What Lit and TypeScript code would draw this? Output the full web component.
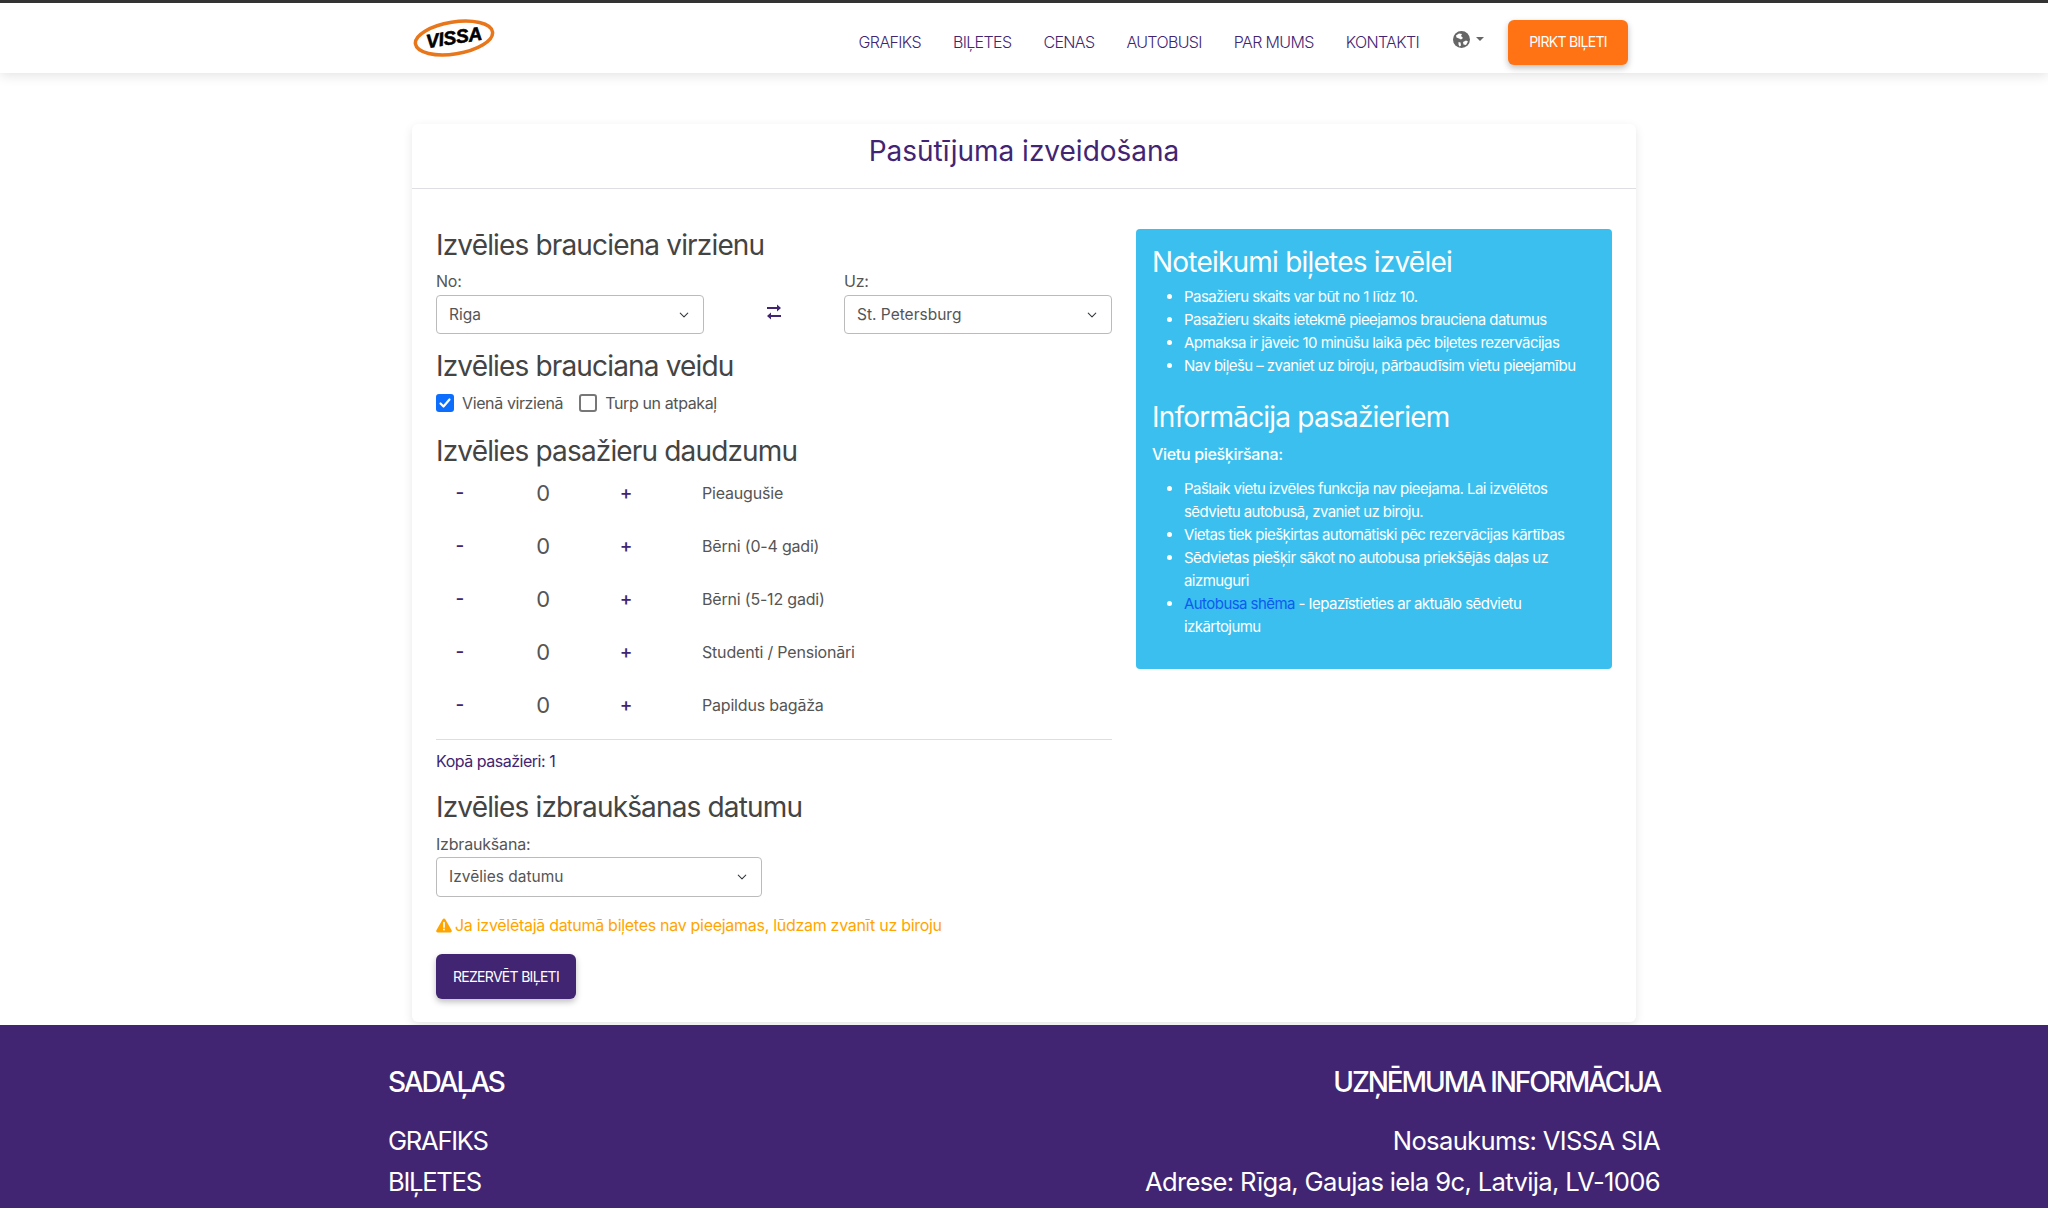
import { LitElement, html, css } from "lit";
import { customElement, state } from "lit/decorators.js";

const chevron = `url("data:image/svg+xml,%3csvg xmlns='http://www.w3.org/2000/svg' viewBox='0 0 16 16'%3e%3cpath fill='none' stroke='%23343a40' stroke-linecap='round' stroke-linejoin='round' stroke-width='1.7' d='m2 5 6 6 6-6'/%3e%3c/svg%3e")`;

@customElement("app-root")
export class AppRoot extends LitElement {
  static styles = css`
    :host { display: block; height: 1208px; overflow: hidden; background: #fff; color: #555; font-family: Inter, "Noto Sans", sans-serif; font-size: 16px; line-height: 24px; letter-spacing: -0.012em; }
    * { box-sizing: border-box; }
    header { height: 73px; background: #fff; border-top: 3px solid #333; box-shadow: 0 2px 12px rgba(0,0,0,.12); position: relative; }
    .bar { width: 1224px; margin: 0 auto; height: 70px; display: flex; align-items: flex-start; }
    .logo { margin-top: 15px; display: block; }
    nav { margin-left: auto; display: flex; align-items: center; gap: 32px; height: 78px; padding-right: 8px; }
    nav a { color: #412573; text-decoration: none; font-size: 16px; font-weight: 300; letter-spacing: -0.04em; }
    .lang { display: flex; align-items: center; gap: 6px; margin: -6px -16px 0 2px; }
    .caret { width: 0; height: 0; border: 4.5px solid transparent; border-top-color: #666; border-bottom: 0; }
    .buy { width: 120px; height: 45px; margin-left: 8px; border: 0; border-radius: 6px; background: #ff7315; color: #fff; font: inherit; font-size: 14px; letter-spacing: -0.05em; box-shadow: 0 3px 6px rgba(0,0,0,.25); }
    .card { width: 1224px; margin: 51px auto 0; height: 898px; background: #fff; border-radius: 6px; box-shadow: 0 3px 10px rgba(0,0,0,.1); }
    .title { height: 65px; border-bottom: 1px solid #dfdfe3; text-align: center; color: #412573; font-size: 28px; font-weight: 400; line-height: 54px; margin: 0; letter-spacing: 0; }
    .body { display: flex; padding: 40px 24px 0; gap: 24px; }
    .left { width: 676px; margin-top: -1px; }
    h3 { margin: 0; font-size: 28px; font-weight: 400; line-height: 34px; color: #444; letter-spacing: -0.03em; }
    label.lbl { display: block; line-height: 24px; }
    .dir { display: flex; justify-content: space-between; align-items: flex-end; margin-top: 7px; }
    .dir > div { width: 268px; }
    .dir select { margin-top: 2px; }
    .swap { width: 140px !important; display: flex; justify-content: center; padding-bottom: 14px; }
    select { display: block; width: 100%; height: 39px; padding: 0 36px 0 12px; appearance: none; border: 1px solid #bbb; border-radius: 4px; color: #555; font: inherit; font-size: 15.5px; letter-spacing: 0; background: #fff ${css([chevron] as any)} no-repeat right 13px center / 12px 10px; }
    .h2 { margin-top: 15px; }
    .checks { display: flex; align-items: center; height: 24px; margin-top: 8px; letter-spacing: -0.024em; }
    .checks label { display: flex; align-items: center; gap: 8px; margin-right: 16px; }
    input[type=checkbox] { appearance: none; margin: 0; width: 18px; height: 18px; border: 2px solid #777; border-radius: 3px; background: #fff; }
    input[type=checkbox]:checked { border: 0; background: #0d6efd; }
    .chk { position: relative; display: flex; }
    .chk svg { position: absolute; left: 0; top: 0; pointer-events: none; }
    .h3 { margin-top: 19px; }
    .rows { margin-top: -2px; }
    .row { display: grid; grid-template-columns: 48px 118px 48px 1fr; height: 53px; align-items: center; letter-spacing: -0.012em; }
    .row button { border: 0; background: none; color: #412573; font: inherit; font-size: 19px; padding: 0; text-align: center; font-weight: 500; }
    .row .n { text-align: center; font-size: 22px; color: #555; }
    .row .name { padding-left: 52px; }
    hr { border: 0; border-top: 1px solid #dedede; margin: 8px 0 0; }
    .total { color: #412573; margin-top: 9px; line-height: 24px; letter-spacing: -0.03em; }
    .h4 { margin-top: 17px; }
    .date { margin-top: 8px; }
    .date select { width: 326px; height: 40px; margin-top: 1px; }
    .warn { display: flex; align-items: center; gap: 3px; margin-top: 16px; color: #ffa500; letter-spacing: -0.018em; }
    .reserve { display: block; width: 140px; height: 45px; margin-top: 17px; border: 0; border-radius: 6px; background: #412573; color: #fff; font: inherit; font-size: 14px; letter-spacing: -0.05em; box-shadow: 0 3px 6px rgba(0,0,0,.25); }
    aside { width: 476px; height: 440px; background: #3abfee; color: #fff; border-radius: 4px; padding: 16px; font-size: 15px; line-height: 23px; letter-spacing: -0.037em; }
    aside h3 { color: #fff; font-size: 28px; letter-spacing: -0.028em; }
    aside ul { margin: 6px 0 0; padding-left: 32px; }
    aside a { color: #0d5cf0; text-decoration: none; }
    aside .i2 { margin-top: 23px; }
    aside p { margin: 9px 0 0; font-weight: 500; font-size: 16px; letter-spacing: -0.02em; }
    aside .l2 { margin-top: 11px; }
    footer { margin-top: 3px; height: 183px; overflow: hidden; background: #412573; color: #fff; }
    .fi { width: 1272px; margin: 0 auto; display: flex; justify-content: space-between; padding-top: 40px; }
    .fi h4 { margin: 0 0 21px; font-size: 28px; line-height: 34px; font-weight: 500; letter-spacing: -0.075em; text-transform: uppercase; }
    .fi div.r { text-align: right; }
    .fi a, .fi span { display: block; color: #fff; text-decoration: none; font-size: 25.6px; line-height: 41px; letter-spacing: -0.05em; }
    .fi span { letter-spacing: -0.026em; }
  `;

  @state() counts = [0, 0, 0, 0, 0];
  @state() oneWay = true;

  private bump(i: number, d: number) {
    this.counts = this.counts.map((v, j) => (j === i ? Math.max(0, v + d) : v));
  }

  render() {
    const names = ["Pieaugušie", "Bērni (0-4 gadi)", "Bērni (5-12 gadi)", "Studenti / Pensionāri", "Papildus bagāža"];
    const total = Math.max(1, this.counts.slice(0, 4).reduce((a, b) => a + b, 0));
    const tick = html`<svg width="18" height="18" viewBox="0 0 18 18" fill="none" stroke="#fff" stroke-width="2.2" stroke-linecap="round" stroke-linejoin="round"><path d="m4.5 9.5 3 3 6-7"/></svg>`;
    return html`
      <header>
        <div class="bar">
          <svg class="logo" width="84" height="40" viewBox="0 0 84 40">
            <ellipse cx="42" cy="20" rx="39" ry="16" transform="rotate(-9 42 20)" fill="#fff" stroke="#e8761a" stroke-width="3.5"/>
            <text x="42" y="26" text-anchor="middle" transform="rotate(-9 42 20)" font-family="Liberation Sans" font-style="italic" font-weight="700" font-size="19" fill="#000" stroke="#000" stroke-width=".6">VISSA</text>
          </svg>
          <nav>
            <a href="#">GRAFIKS</a><a href="#">BIĻETES</a><a href="#">CENAS</a><a href="#">AUTOBUSI</a><a href="#">PAR MUMS</a><a href="#">KONTAKTI</a>
            <span class="lang">
              <svg width="17" height="17" viewBox="0 0 17 17"><circle cx="8.5" cy="8.5" r="8.5" fill="#666"/><path d="M3 4.5 6 2.5 9 3 8 5 10 7 8 8.5 6 7.5 3.5 6.5zM10 11l3-1.5 2 1-2 3.5-2.5-.5zM5.5 11l2 .5.5 3-1.5 1-1-2z" fill="#fff"/></svg>
              <span class="caret"></span>
            </span>
            <button class="buy">PIRKT BIĻETI</button>
          </nav>
        </div>
      </header>
      <main class="card">
        <h1 class="title">Pasūtījuma izveidošana</h1>
        <div class="body">
          <section class="left">
            <h3>Izvēlies brauciena virzienu</h3>
            <div class="dir">
              <div><label class="lbl">No:</label><select><option>Riga</option><option>St. Petersburg</option></select></div>
              <div class="swap">
                <svg width="16" height="16" viewBox="0 0 16 16"><path d="M1 3.5h10V1l4 3.5L11 8V5.6H1z" fill="#412573" transform="translate(0 -.5)"/><path d="M15 10.5H5V8l-4 3.5L5 15v-2.4h10z" fill="#412573" transform="translate(0 .5)"/></svg>
              </div>
              <div><label class="lbl">Uz:</label><select><option>St. Petersburg</option><option>Riga</option></select></div>
            </div>
            <h3 class="h2">Izvēlies brauciana veidu</h3>
            <div class="checks">
              <label><span class="chk"><input type="checkbox" .checked=${this.oneWay} @change=${() => (this.oneWay = !this.oneWay)} />${this.oneWay ? tick : ""}</span>Vienā virzienā</label>
              <label><span class="chk"><input type="checkbox" .checked=${!this.oneWay} @change=${() => (this.oneWay = !this.oneWay)} />${!this.oneWay ? tick : ""}</span>Turp un atpakaļ</label>
            </div>
            <h3 class="h3">Izvēlies pasažieru daudzumu</h3>
            <div class="rows">
              ${names.map((n, i) => html`<div class="row">
                <button @click=${() => this.bump(i, -1)}>-</button>
                <span class="n">${this.counts[i]}</span>
                <button @click=${() => this.bump(i, 1)}>+</button>
                <span class="name">${n}</span>
              </div>`)}
            </div>
            <hr />
            <div class="total">Kopā pasažieri: ${total}</div>
            <h3 class="h4">Izvēlies izbraukšanas datumu</h3>
            <div class="date"><label class="lbl">Izbraukšana:</label><select><option>Izvēlies datumu</option></select></div>
            <div class="warn">
              <svg width="16" height="15" viewBox="0 0 16 15"><path d="M8 .5a1.5 1.5 0 0 1 1.3.8l6.3 11a1.5 1.5 0 0 1-1.3 2.2H1.7A1.5 1.5 0 0 1 .4 12.3l6.3-11A1.5 1.5 0 0 1 8 .5z" fill="#ffa500"/><path d="M8 4.5v4.6" stroke="#fff" stroke-width="1.7" stroke-linecap="round"/><circle cx="8" cy="11.6" r="1" fill="#fff"/></svg>
              Ja izvēlētajā datumā biļetes nav pieejamas, lūdzam zvanīt uz biroju
            </div>
            <button class="reserve">REZERVĒT BIĻETI</button>
          </section>
          <aside>
            <h3>Noteikumi biļetes izvēlei</h3>
            <ul>
              <li>Pasažieru skaits var būt no 1 līdz 10.</li>
              <li>Pasažieru skaits ietekmē pieejamos brauciena datumus</li>
              <li>Apmaksa ir jāveic 10 minūšu laikā pēc biļetes rezervācijas</li>
              <li>Nav biļešu – zvaniet uz biroju, pārbaudīsim vietu pieejamību</li>
            </ul>
            <h3 class="i2">Informācija pasažieriem</h3>
            <p>Vietu piešķiršana:</p>
            <ul class="l2">
              <li>Pašlaik vietu izvēles funkcija nav pieejama. Lai izvēlētos sēdvietu autobusā, zvaniet uz biroju.</li>
              <li>Vietas tiek piešķirtas automātiski pēc rezervācijas kārtības</li>
              <li>Sēdvietas piešķir sākot no autobusa priekšējās daļas uz aizmuguri</li>
              <li><a href="#">Autobusa shēma</a> - Iepazīstieties ar aktuālo sēdvietu izkārtojumu</li>
            </ul>
          </aside>
        </div>
      </main>
      <footer>
        <div class="fi">
          <div><h4>Sadaļas</h4><a href="#">GRAFIKS</a><a href="#">BIĻETES</a></div>
          <div class="r"><h4>Uzņēmuma informācija</h4><span>Nosaukums: VISSA SIA</span><span>Adrese: Rīga, Gaujas iela 9c, Latvija, LV-1006</span></div>
        </div>
      </footer>
    `;
  }
}
